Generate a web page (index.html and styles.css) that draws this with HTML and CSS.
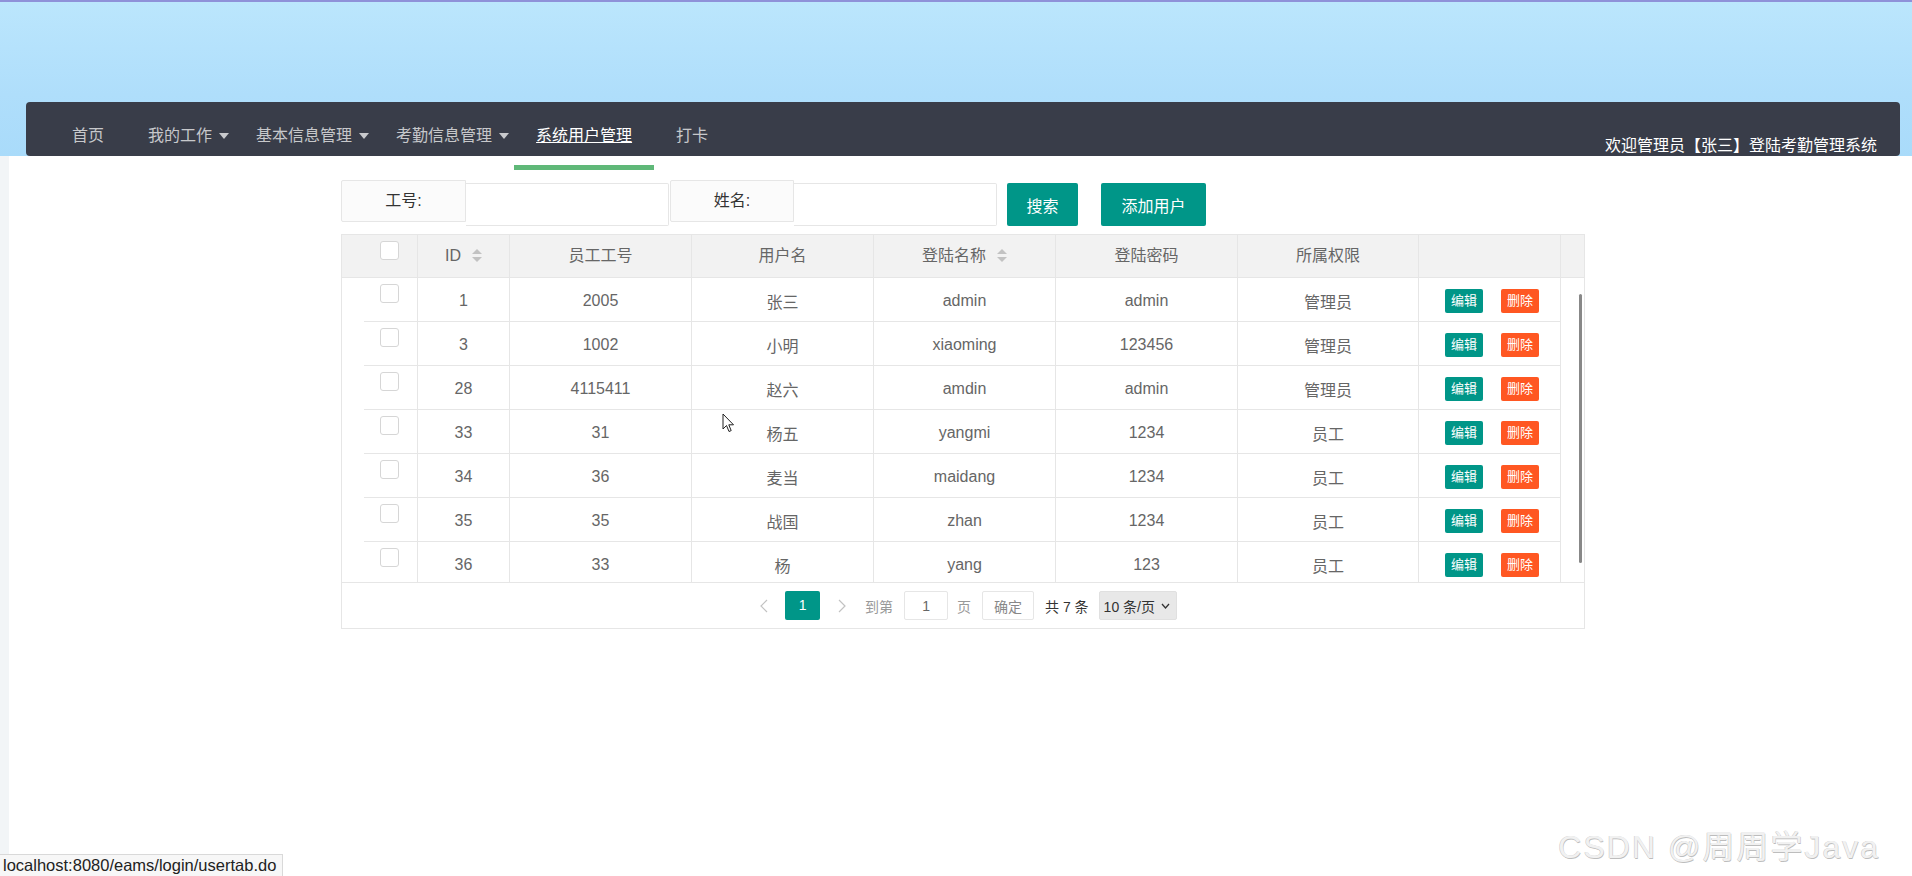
FILE: index.html
```html
<!DOCTYPE html>
<html lang="zh-CN">
<head>
    <meta charset="UTF-8">
    <title>系统用户管理</title>
    <link rel="stylesheet" href="styles.css">
</head>
<body>
    <div class="top">
        <div class="navbar">
            <ul class="nav">
                <li><a>首页</a></li>
                <li class="more"><a>我的工作<i class="caret"></i></a></li>
                <li class="more"><a>基本信息管理<i class="caret"></i></a></li>
                <li class="more"><a>考勤信息管理<i class="caret"></i></a></li>
                <li class="active"><a>系统用户管理</a></li>
                <li><a>打卡</a></li>
            </ul>
            <div class="welcome">欢迎管理员【张三】登陆考勤管理系统</div>
        </div>
    </div>

    <div class="main">
        <div class="wrap">
            <div class="search">
                <label class="field-label">工号:</label>
                <input class="field-input" type="text">
                <label class="field-label">姓名:</label>
                <input class="field-input" type="text">
                <button class="btn btn-search">搜索</button>
                <button class="btn btn-add">添加用户</button>
            </div>

            <div class="grid">
                <table class="grid-head">
                    <colgroup>
                        <col class="c-cb"><col class="c-id"><col class="c-wide"><col class="c-wide">
                        <col class="c-wide"><col class="c-wide"><col class="c-role"><col class="c-op"><col class="c-gut">
                    </colgroup>
                    <tr>
                        <th class="cb-cell"><span class="cb"></span></th>
                        <th>ID<span class="sort"><i class="up"></i><i class="down"></i></span></th>
                        <th>员工工号</th>
                        <th>用户名</th>
                        <th>登陆名称<span class="sort"><i class="up"></i><i class="down"></i></span></th>
                        <th>登陆密码</th>
                        <th>所属权限</th>
                        <th></th>
                        <th class="gut"></th>
                    </tr>
                </table>

                <div class="grid-body">
                    <table class="grid-rows">
                        <colgroup>
                            <col class="c-cb"><col class="c-id"><col class="c-wide"><col class="c-wide">
                            <col class="c-wide"><col class="c-wide"><col class="c-role"><col class="c-op">
                        </colgroup>
                        <tbody id="rows"></tbody>
                    </table>
                    <div class="gutter"><span class="thumb"></span></div>
                </div>

                <div class="pager">
                    <span class="pg-arrow">
                        <svg width="8" height="14" viewBox="0 0 8 14"><polyline points="7,1 1,7 7,13" fill="none" stroke="#c2c2c2" stroke-width="1.2"/></svg>
                    </span>
                    <span class="pg-cur">1</span>
                    <span class="pg-arrow">
                        <svg width="8" height="14" viewBox="0 0 8 14"><polyline points="1,1 7,7 1,13" fill="none" stroke="#c2c2c2" stroke-width="1.2"/></svg>
                    </span>
                    <span class="pg-text">到第</span>
                    <input class="pg-input" type="text" value="1">
                    <span class="pg-text">页</span>
                    <button class="pg-ok">确定</button>
                    <span class="pg-count">共 7 条</span>
                    <span class="pg-limit">10 条/页
                        <svg width="9" height="6" viewBox="0 0 9 6"><polyline points="1,1 4.5,5 8,1" fill="none" stroke="#333" stroke-width="1.3"/></svg>
                    </span>
                </div>
            </div>
        </div>
    </div>

    <svg class="cursor" width="13" height="20" viewBox="0 0 13 20">
        <path d="M1 1 L1 16 L4.5 12.5 L7 18.5 L9.2 17.6 L6.8 11.8 L11.5 11.8 Z" fill="#fff" stroke="#222" stroke-width="1"/>
    </svg>

    <div class="status">localhost:8080/eams/login/usertab.do</div>
    <div class="watermark">CSDN @周周学Java</div>

    <script>
        const users = [
            [1, '2005', '张三', 'admin', 'admin', '管理员'],
            [3, '1002', '小明', 'xiaoming', '123456', '管理员'],
            [28, '4115411', '赵六', 'amdin', 'admin', '管理员'],
            [33, '31', '杨五', 'yangmi', '1234', '员工'],
            [34, '36', '麦当', 'maidang', '1234', '员工'],
            [35, '35', '战国', 'zhan', '1234', '员工'],
            [36, '33', '杨', 'yang', '123', '员工']
        ];

        const tbody = document.getElementById('rows');
        tbody.innerHTML = users.map(u => `
            <tr>
                <td class="cb-cell"><span class="cb"></span></td>
                ${u.map(v => `<td>${v}</td>`).join('')}
                <td class="ops"><a class="mini mini-edit">编辑</a><a class="mini mini-del">删除</a></td>
            </tr>`).join('');
    </script>
</body>
</html>
```

FILE: styles.css
```css
* {
    box-sizing: border-box;
}

html, body {
    margin: 0;
    height: 100%;
}

body {
    position: relative;
    background: #f2f5f7;
    font-family: "Liberation Sans", "Noto Sans CJK SC", sans-serif;
    font-size: 16px;
    color: #666;
    overflow: hidden;
}

ul {
    margin: 0;
    padding: 0;
    list-style: none;
}

/* top banner + nav */
.top {
    height: 156px;
    padding: 100px 12px 0 26px;
    border-top: 2px solid #8f91d9;
    background: linear-gradient(180deg, #bbe6fd 0%, #afdefb 60%, #a9dbfa 100%);
}

.navbar {
    display: flex;
    justify-content: space-between;
    height: 54px;
    background: #393d49;
    border-radius: 4px;
}

.nav {
    display: flex;
    padding: 22px 0 0 24px;
}

.nav li {
    position: relative;
    padding: 0 22px;
}

.nav li.more {
    padding-right: 5px;
}

.nav a {
    display: flex;
    align-items: center;
    line-height: 24px;
    color: rgba(255, 255, 255, 0.72);
    white-space: nowrap;
}

.nav li.active a {
    color: #fff;
    text-decoration: underline;
}

.nav li.active::after {
    content: "";
    position: absolute;
    left: 0;
    right: 0;
    top: 41px;
    height: 5px;
    background: #5fb878;
}

.caret {
    display: inline-block;
    margin-left: 7px;
    border-left: 5.5px solid transparent;
    border-right: 5.5px solid transparent;
    border-top: 6px solid rgba(255, 255, 255, 0.72);
}

.welcome {
    align-self: flex-end;
    line-height: 20px;
    padding-right: 23px;
    color: #fff;
    white-space: nowrap;
}

/* main area */
.main {
    margin-left: 9px;
    height: calc(100% - 156px);
    background: #fff;
}

.wrap {
    width: 1244px;
    margin-left: 332px;
    padding-top: 24px;
}

.search {
    display: flex;
    align-items: flex-start;
}

.field-label {
    width: 125px;
    height: 42px;
    line-height: 40px;
    text-align: center;
    color: #333;
    background: #fbfbfb;
    border: 1px solid #e6e6e6;
    border-radius: 2px 0 0 2px;
}

.search .field-label + .field-input + .field-label {
    margin-left: 1px;
    width: 124px;
}

.field-input {
    width: 203px;
    height: 43px;
    margin-top: 3px;
    border: 1px solid #e6e6e6;
    border-left: none;
    border-radius: 0 2px 2px 0;
    background: #fff;
    outline: none;
}

.btn {
    height: 43px;
    margin-top: 3px;
    padding: 0;
    border: none;
    border-radius: 2px;
    background: #009688;
    color: #fff;
    font: inherit;
    cursor: pointer;
}

.btn-search {
    margin-left: 10px;
    width: 71px;
}

.btn-add {
    margin-left: 23px;
    width: 105px;
}

/* table */
.grid {
    margin-top: 8px;
    border: 1px solid #e6e6e6;
}

.grid table {
    table-layout: fixed;
    border-collapse: separate;
    border-spacing: 0;
}

.grid-head {
    width: 1242px;
}

.grid-rows {
    width: 1219px;
}

.c-cb { width: 76px; }
.c-id { width: 92px; }
.c-wide { width: 182px; }
.c-role { width: 181px; }
.c-op { width: 142px; }
.c-gut { width: 23px; }

.grid th,
.grid td {
    padding: 0;
    text-align: center;
    vertical-align: middle;
    font-weight: normal;
    white-space: nowrap;
    border-right: 1px solid #e6e6e6;
    border-bottom: 1px solid #e6e6e6;
}

.grid th {
    height: 43px;
    line-height: 20px;
    background: #f2f2f2;
}

.grid th.gut {
    border-right: none;
}

.grid td {
    height: 44px;
    padding-top: 3px;
}

.grid .cb-cell {
    vertical-align: top;
    text-align: left;
    padding: 6px 0 0 38px;
}

.grid td.cb-cell {
    border-bottom: none;
    background: linear-gradient(#e6e6e6, #e6e6e6) right bottom / calc(100% - 22px) 1px no-repeat;
}

.grid td.ops {
    padding: 0 0 0 5px;
}

.cb {
    display: inline-block;
    width: 19px;
    height: 19px;
    background: #fff;
    border: 1px solid #d6d6d6;
    border-radius: 3px;
}

.sort {
    display: inline-flex;
    flex-direction: column;
    gap: 3px;
    margin-left: 11px;
    vertical-align: middle;
    margin-top: -3px;
}

.sort i {
    border-left: 5px solid transparent;
    border-right: 5px solid transparent;
}

.sort .up {
    border-bottom: 5px solid #c2c2c2;
}

.sort .down {
    border-top: 5px solid #c2c2c2;
}

.grid-body {
    display: flex;
    height: 304px;
    overflow: hidden;
}

.gutter {
    flex: 1;
    padding: 16px 0 0 18px;
}

.thumb {
    display: block;
    width: 3px;
    height: 269px;
    border-radius: 2px;
    background: #888;
}

.mini {
    display: inline-block;
    height: 24px;
    line-height: 24px;
    padding: 0 6px;
    margin: 2px 9px 0;
    font-size: 13px;
    color: #fff;
    border-radius: 2px;
}

.mini-edit {
    background: #009688;
}

.mini-del {
    background: #ff5722;
}

/* pagination */
.pager {
    display: flex;
    align-items: center;
    justify-content: center;
    height: 46px;
    padding: 0 0 0 9px;
    border-top: 1px solid #e6e6e6;
    font-size: 14px;
}

.pg-arrow {
    display: flex;
    width: 12px;
    justify-content: center;
}

.pg-cur {
    width: 35px;
    height: 29px;
    line-height: 29px;
    margin: 0 16px 0 15px;
    text-align: center;
    color: #fff;
    background: #009688;
    border-radius: 2px;
}

.pg-text {
    color: #999;
}

.pg-arrow + .pg-text {
    margin-left: 17px;
}

.pg-input {
    width: 44px;
    height: 29px;
    margin: 0 9px 0 11px;
    border: 1px solid #e6e6e6;
    border-radius: 2px;
    text-align: center;
    font: inherit;
    color: #666;
    outline: none;
}

.pg-ok {
    width: 52px;
    height: 29px;
    margin: 0 11px;
    padding: 0;
    border: 1px solid #e6e6e6;
    border-radius: 2px;
    background: #fff;
    font: inherit;
    color: #888;
}

.pg-count {
    color: #333;
}

.pg-limit {
    display: flex;
    align-items: center;
    gap: 6px;
    height: 29px;
    margin-left: 10px;
    padding: 0 6px 0 4px;
    color: #333;
    background: #e8e8e8;
    border: 1px solid #e0e0e0;
    border-radius: 2px;
}

/* overlays */
.cursor {
    position: absolute;
    left: 722px;
    top: 413px;
}

.status {
    position: absolute;
    left: 0;
    bottom: 0;
    height: 22px;
    padding: 0 6px 0 3px;
    line-height: 21px;
    font-size: 16.5px;
    color: #222;
    background: #f7f7f7;
    border-top: 1px solid #d9d9d9;
    border-right: 1px solid #d9d9d9;
}

.watermark {
    position: absolute;
    right: 32px;
    bottom: 9px;
    font-size: 32px;
    letter-spacing: 2px;
    color: #f1f1f1;
    text-shadow: -0.5px -0.5px 0 #c8c8c8, 0.5px 0.5px 0 #bdbdbd;
    white-space: nowrap;
}
```
